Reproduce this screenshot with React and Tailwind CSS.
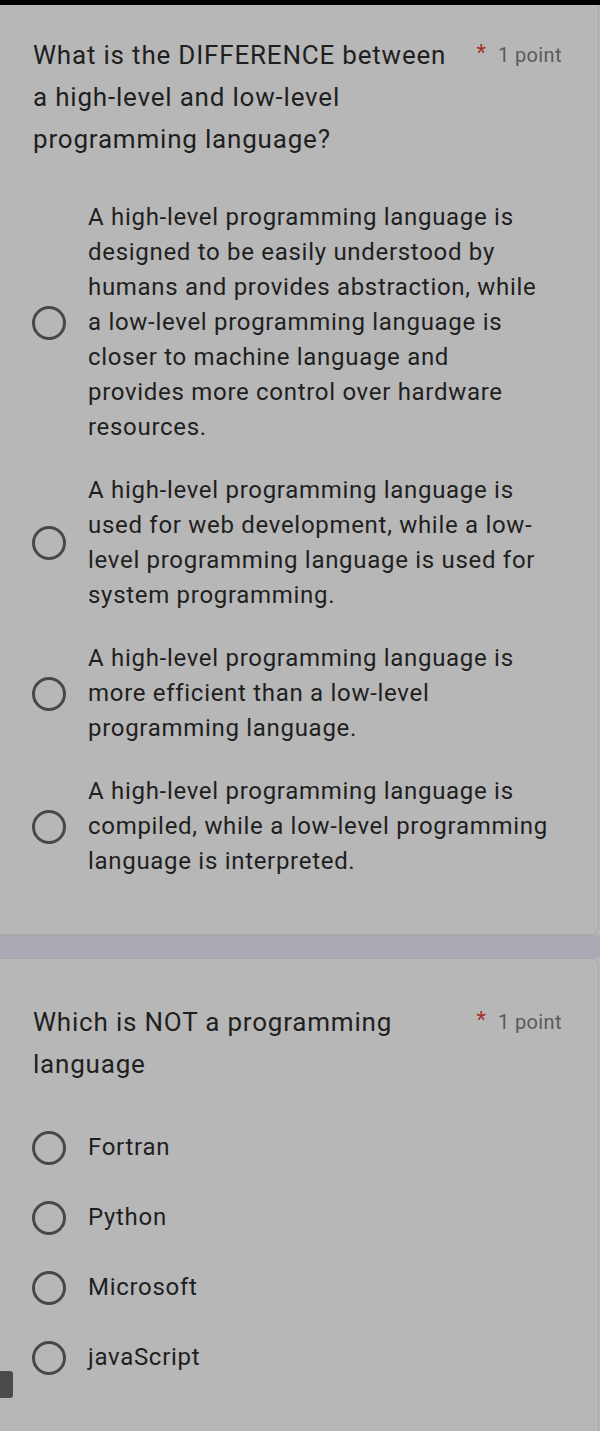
import React from 'react';

const q1Options = [
  'A high-level programming language is designed to be easily understood by humans and provides abstraction, while a low-level programming language is closer to machine language and provides more control over hardware resources.',
  'A high-level programming language is used for web development, while a low-level programming language is used for system programming.',
  'A high-level programming language is more efficient than a low-level programming language.',
  'A high-level programming language is compiled, while a low-level programming language is interpreted.',
];

const q2Options = ['Fortran', 'Python', 'Microsoft', 'javaScript'];

const Radio = () => (
  <div className="w-[34px] h-[34px] shrink-0 rounded-full border-[3px] border-[#484848]" />
);

const Title = ({ children }) => (
  <div className="flex items-start pl-[33px] pr-[36px]">
    <h2 className="flex-1 text-[26px] tracking-[0.8px] leading-[42px] text-[#1f1f1f]">{children}</h2>
    <div className="shrink-0 flex items-center gap-[12px] ml-[22px] h-[42px]">
      <span className="text-[22px] text-[#a3302a] leading-none -mt-[4px]">*</span>
      <span className="text-[20px] tracking-[0.4px] text-[#5b5b5b]">1 point</span>
    </div>
  </div>
);

export default function App() {
  return (
    <div className="relative min-h-[1431px] flex flex-col bg-[#b7b7b7]" style={{ fontFamily: 'Roboto, "Noto Sans", sans-serif' }}>
      <div className="h-[5px] bg-black" />

      {/* question 1 */}
      <section className="pt-[29px] pb-[55px] border-b border-r border-[#a8a8a8] rounded-br-lg mr-[1px]">
        <Title>
          What is the DIFFERENCE between a high-level and low-level programming language?
        </Title>
        <div className="flex flex-col gap-[28px] mt-[40px] pl-[32px] pr-[49px]">
          {q1Options.map((opt) => (
            <label key={opt} className="flex items-center gap-[22px]">
              <Radio />
              <span className="text-[24px] tracking-[0.7px] leading-[35px] text-[#1f1f1f]">{opt}</span>
            </label>
          ))}
        </div>
      </section>

      <div className="h-[23px] bg-[#aba9b3]" />

      {/* question 2 */}
      <section className="flex-1 pt-[42px] border-t border-r border-[#a8a8a8] rounded-tr-lg mr-[1px]">
        <Title>Which is NOT a programming language</Title>
        <div className="flex flex-col gap-[35px] mt-[45px] pl-[32px]">
          {q2Options.map((opt) => (
            <label key={opt} className="flex items-center gap-[22px]">
              <Radio />
              <span className="text-[24px] tracking-[0.7px] leading-[35px] text-[#1f1f1f]">{opt}</span>
            </label>
          ))}
        </div>
      </section>

      <div className="absolute left-0 top-[1371px] w-[13px] h-[27px] rounded-r-[3px] bg-[#4b4b4b]" />
    </div>
  );
}
